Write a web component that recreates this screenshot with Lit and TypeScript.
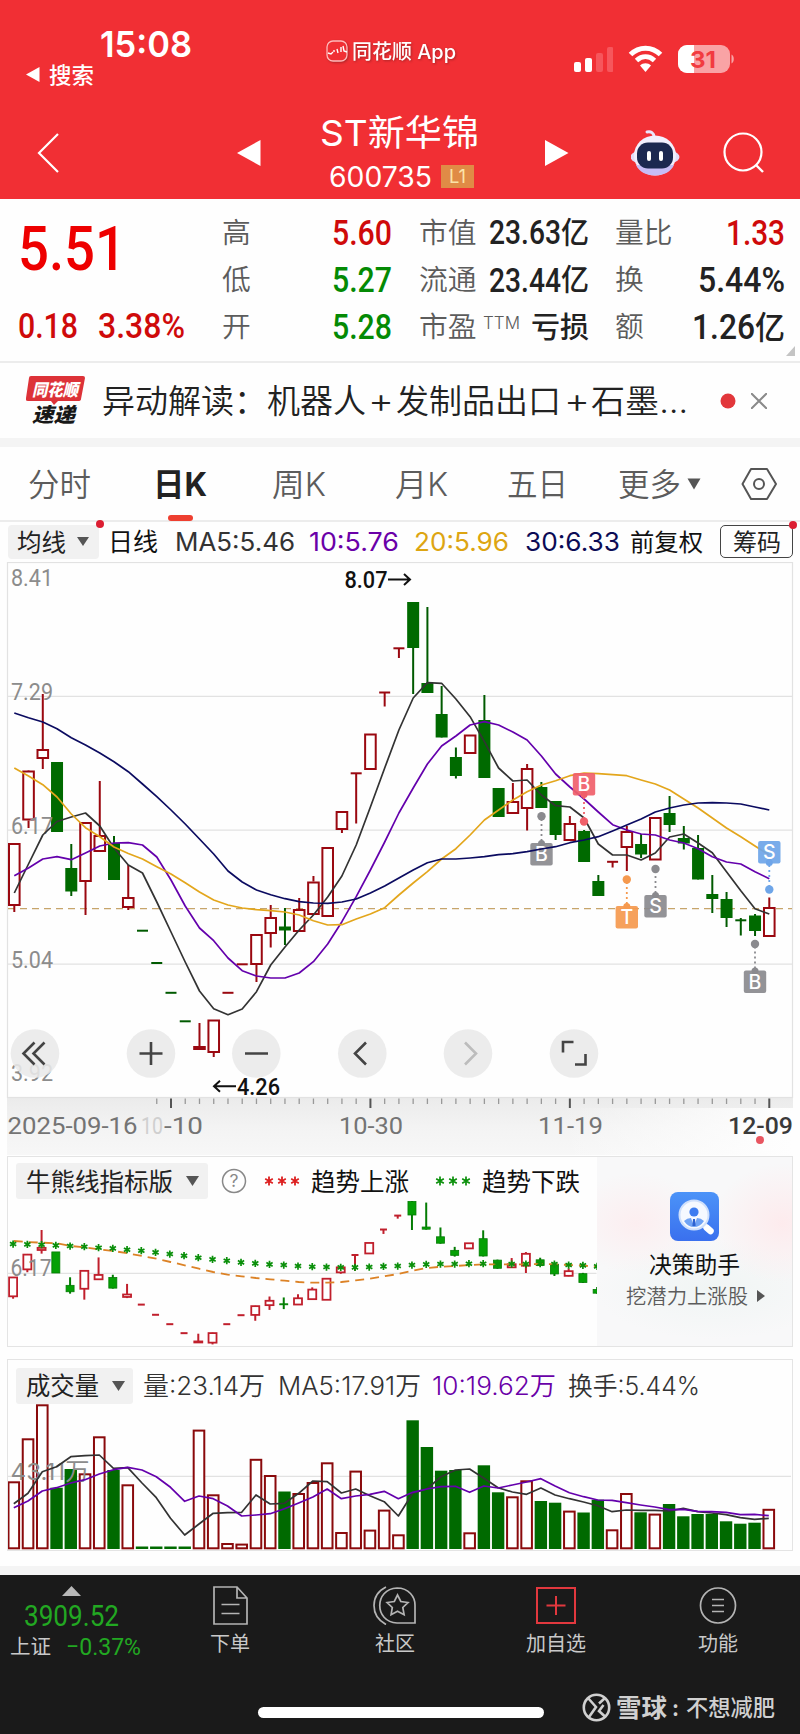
import { LitElement, html, svg, css } from "lit";
import { customElement } from "lit/decorators.js";

type Candle = [kind: "r" | "g", top: number, bottom: number, high?: number, low?: number];

const X0 = 14.3;
const STEP = 14.245;
const cx = (i: number) => X0 + i * STEP;

// Daily candles in chart coordinates: body top, body bottom, wick top, wick bottom.
const CANDLES: Candle[] = [
  ["r", 843, 906, 843, 912], ["r", 770.5, 820.5, 770, 828], ["r", 749, 759, 694, 769], ["g", 762, 832],
  ["g", 868, 891.5, 844, 896], ["r", 822, 882, 822, 915], ["r", 835, 852, 781, 852], ["g", 843, 880, 836, 880],
  ["r", 897, 908, 865, 910], ["g", 930.7, 930.7], ["g", 963, 963], ["g", 992.8, 992.8],
  ["g", 1021.3, 1021.3], ["r", 1046, 1050, 1023, 1050], ["r", 1019.5, 1053, 1019.5, 1057], ["r", 992.8, 992.8],
  ["r", 964.3, 964.3], ["r", 934, 965, 934, 982], ["r", 917, 934, 905, 947.5], ["g", 926.5, 930.5, 908, 945],
  ["r", 909, 932, 898, 932], ["r", 881.5, 915, 876, 915], ["r", 847, 917], ["r", 811, 830, 811, 833],
  ["r", 773.3, 773.3, 773, 823.5], ["r", 733.5, 770], ["r", 692.5, 692.5, 692, 706.5], ["r", 648.3, 648.3, 648, 658],
  ["g", 602, 648, 602, 694], ["g", 683, 693, 607, 693], ["g", 714, 737.5, 686, 737.5], ["g", 757, 776, 747.5, 778.5],
  ["r", 734.5, 754], ["g", 720, 778, 695, 778], ["g", 788, 817, 788, 817], ["r", 801, 814, 783, 814],
  ["r", 768, 809, 764, 830.5], ["g", 787, 808, 782, 808], ["g", 801, 835, 801, 840], ["r", 823, 841, 816, 841],
  ["g", 831, 862, 830, 862], ["g", 881, 896, 875, 896], ["r", 861.8, 861.8, 861, 867.5], ["r", 831, 848, 826, 871],
  ["g", 844, 854.5, 834, 858], ["r", 817, 860.5], ["g", 813, 825, 796, 832], ["g", 838, 843.5, 826, 849.5],
  ["g", 848, 879.5, 835, 879.5], ["g", 894, 899, 875, 913], ["g", 899, 918, 892, 927], ["g", 920.3, 920.3, 918, 935.5],
  ["g", 915.5, 931, 914, 936], ["r", 907, 937, 897.5, 937],
];

const MA5 = [893, 864, 835, 821.5, 817, 813, 826, 848, 865, 873, 902, 932, 962, 991, 1008.7, 1014.7, 1009, 991.7, 965, 947, 930, 915, 897, 876, 845, 807, 768, 730, 698, 682.7, 683.3, 699, 716.7, 741.7, 768, 781, 780, 795, 805.7, 807, 818, 844, 855, 855, 860, 853, 837, 834, 843, 852.7, 871.7, 890.7, 908.7, 914];
const MA10 = [875.7, 868, 859, 856.7, 859.7, 853, 846, 843, 842.7, 845, 857, 880, 906, 928, 940.7, 958, 970.7, 976, 978, 978, 973, 961.7, 944, 921.7, 896.7, 870, 842, 813, 788, 764, 746, 736, 725, 721.7, 725, 732, 740, 756, 774, 787, 799, 812, 824.7, 830, 834, 835, 840, 843, 848.7, 856.7, 862, 864, 871.7, 878.7];
const MA20 = [768, 776, 784.7, 797, 814, 827.7, 836.7, 847, 853.5, 859, 866.7, 874, 882.7, 892, 900, 905, 908, 909.7, 910.7, 912, 915, 920.7, 925, 924.7, 919, 914, 907.7, 895, 883, 871.7, 859, 848.7, 835, 820, 810, 800, 791.7, 785, 780.7, 775.7, 773, 773.7, 774.7, 775.7, 780, 784, 790, 799, 808, 818, 828, 836.7, 846, 855];
const MA30 = [713, 717.7, 722, 728.7, 737.7, 745, 753, 761.7, 771.7, 784, 796.7, 810, 824, 839, 854, 871, 882, 890, 894.7, 898.7, 901.7, 903, 903.3, 902, 899, 893, 886, 878, 870, 862.7, 859, 859, 858, 856.7, 854.7, 853.7, 851.7, 849, 846.7, 842.7, 840, 836.7, 831, 825, 819, 812, 808, 805, 803, 802.7, 803, 804, 807, 810];

const VOL = [1482, 1439, 1405, 1487.7, 1469, 1474, 1437, 1470, 1485, 1546.5, 1546.5, 1546.5, 1546.5, 1430.3, 1495, 1543.7, 1544.3, 1459.5, 1475.7, 1491.5, 1493.7, 1482.7, 1463, 1532.7, 1471.3, 1530.3, 1510.3, 1535, 1420.3, 1447, 1470.7, 1470, 1533, 1465.3, 1492.3, 1497, 1481, 1501, 1502.7, 1511.3, 1512.5, 1499.7, 1530, 1493.7, 1512.3, 1514.3, 1504, 1516.3, 1514, 1514, 1521.3, 1523.7, 1522.7, 1509.5];
const vy = (v: number) => 1355 + v / 3;
const VMA5 = [446, 415, 350, 335, 305, 302, 300, 340, 338, 384, 428, 490, 540, 507, 475, 473, 472, 420, 447, 445, 415, 378, 380, 414, 402, 422, 440, 483, 415, 402, 365, 345, 342, 370, 398, 411, 418, 399, 420, 431, 441, 452, 470, 465, 466, 466, 468, 460, 470, 474, 479, 488, 493, 490].map(vy);
const VMA10 = [458, 438, 408, 398, 384, 374, 357, 344, 337, 345, 365, 397, 439, 423, 431, 453, 483, 480, 476, 461, 444, 426, 402, 431, 423, 418, 409, 431, 412, 402, 395, 394, 412, 393, 399, 390, 381, 371, 393, 413, 425, 435, 436, 443, 450, 456, 464, 463, 469, 470, 472, 479, 478, 482].map(vy);

const my = (v: number) => 1150 + v / 3;
const BULL = [283, 284, 285, 287, 289, 291, 294, 296, 300, 303, 308, 313, 318, 324, 329, 333, 338, 341, 344, 346, 349, 351, 352, 353, 353, 352, 350, 349, 346, 344, 343, 343, 342, 342, 343, 343, 343, 342, 343, 346, 347, 350].map(my);
const BEAR = [273, 276, 278, 280, 288, 292, 298, 303, 310, 318, 326, 336, 346, 356, 366, 374, 379, 384, 388, 392, 396, 398, 398, 396, 391, 386, 379, 372, 362, 354, 350, 348, 345, 343, 343, 343, 343, 342, 343, 345, 347, 350].map(my);

const path = (ys: number[]) => ys.map((y, i) => `${cx(i).toFixed(1)},${y.toFixed(1)}`).join(" ");

// A text run stretched to a fixed advance; its box is exactly as tall as the capitals.
const din = (t: string, w: number, cap: number, cls = "") => html`<svg class="t" width=${w} height=${cap}><text class="din ${cls}" y=${cap} font-size=${cap / 0.711} textLength=${w} lengthAdjust="spacingAndGlyphs">${t}</text></svg>`;
const sf = (t: string, w: number, cap: number, cls = "") => html`<svg class="t" width=${w} height=${cap}><text class="sf ${cls}" y=${cap} font-size=${cap / 0.727} textLength=${w} lengthAdjust="spacingAndGlyphs">${t}</text></svg>`;
const cjk = (t: string, w: number, size: number, cls = "") => html`<svg class="t" width=${w} height=${size}><text class="cjk ${cls}" y=${size * 0.88} font-size=${size} textLength=${w} lengthAdjust="spacingAndGlyphs">${t}</text></svg>`;
const label = (t: string, x: number, y: number, w: number, size: number, cls: string) => svg`<text class=${cls} x=${x} y=${y} font-size=${size} textLength=${w} lengthAdjust="spacingAndGlyphs">${t}</text>`;

const base = css`
  :host { display: block; box-sizing: border-box; }
  * { box-sizing: border-box; }
  svg { display: block; flex: none; }
  .t { overflow: visible; }
  text { white-space: pre; }
  .din { font-family: Roboto, "Noto Sans CJK SC", sans-serif; font-weight: 500; }
  .sf { font-family: Inter, "Noto Sans CJK SC", sans-serif; }
  .cjk { font-family: Inter, "Noto Sans CJK SC", sans-serif; font-weight: 400; }
  .light { font-weight: 350; }
  .reg { font-weight: 400; }
  .mid { font-weight: 500; }
  .semi { font-weight: 600; }
  .bold { font-weight: 700; }
  .white { fill: #fff; }
  .black { fill: #111; }
  .dark { fill: #333; }
  .ink { fill: #222; }
  .gray { fill: #5c5c5c; }
  .soft { fill: #8c8c8c; }
  .up { fill: #cf0a0a; }
  .big { fill: #ee0000; }
  .down { fill: #048a04; }
  .purple { fill: #6a00a8; }
  .gold { fill: #dda512; }
  .navy { fill: #0b0b55; }
  .candle-r { fill: #fff; stroke: #9a0810; stroke-width: 2; }
  .candle-g { fill: #006a00; }
  .wick-r { stroke: #9a0810; stroke-width: 2; fill: none; }
  .wick-g { stroke: #005a00; stroke-width: 2; fill: none; }
  .grid { stroke: #e2e2e2; stroke-width: 1.2; fill: none; }
  .l5 { stroke: #333; }
  .l10 { stroke: #6400ac; }
  .l20 { stroke: #e3a61c; }
  .l30 { stroke: #0b0b60; }
  .ma { fill: none; stroke-width: 1.7; stroke-linejoin: round; }
`;

@customElement("app-header")
class AppHeader extends LitElement {
  static styles = [base, css`
    :host { height: 199px; background: #f12f34; }
    .status { display: grid; grid-template-columns: 326px 248px 1fr; height: 90px; }
    .left { display: grid; grid-template-rows: 26px 21px; row-gap: 7px; padding: 31px 0 0 26px; }
    .time { padding-left: 74px; }
    .back-app { display: flex; align-items: center; gap: 9px; }
    .mid-app { display: flex; gap: 4px; padding-top: 40px; align-items: center; align-self: start; filter: drop-shadow(1px 1px 1px #8a2020aa); }
    .right { display: flex; padding-top: 45px; align-items: flex-start; gap: 15px; }
    .nav { display: grid; grid-template-columns: 37px 200px 83px 225px 86px 92px 1fr; height: 109px; align-items: center; padding-top: 17px; }
    .name { display: grid; row-gap: 15px; justify-items: start; padding-bottom: 5px; }
    .code { display: flex; align-items: center; gap: 9px; padding-left: 9px; }
    .l1 { width: 33px; height: 23px; background: #e08b46; display: grid; place-items: center; }
    .l1t { fill: #fbe3a8; }
    .bt { fill: #f23b40; }
  `];
  render() {
    return html`
      <div class="status">
        <div class="left">
          <div class="time">${sf("15:08", 92, 26, "white semi")}</div>
          <div class="back-app">
            <svg width="14" height="15"><path d="M13.500 0V15L0 7.500Z" fill="#fff" /></svg>
            ${cjk("搜索", 45, 22, "white mid")}
          </div>
        </div>
        <div class="mid-app">
          <svg width="22" height="22" viewBox="0 0 22 22"><rect x="1" y="1" width="20" height="20" rx="6" fill="#f12f34" stroke="#fbb" stroke-width="1.300" /><path d="M2 13l3 1 2-2M8 10v2M11 9l1 4M15 7v5M17 6l1 5 3 1" stroke="#fff" stroke-width="1.400" fill="none" /></svg>
          ${cjk("同花顺 App", 104, 20, "white mid")}
        </div>
        <div class="right">
          <svg width="39" height="28"><rect x="0" y="17" width="7" height="10" rx="2" fill="#fff" /><rect x="11" y="13" width="7" height="14" rx="2" fill="#fff" /><rect x="22" y="8" width="7" height="19" rx="2" fill="#f6565c" /><rect x="33" y="2" width="6.500" height="25" rx="2" fill="#f6565c" /></svg>
          <svg width="35" height="28" viewBox="0 0 35 28"><g fill="none" stroke="#fff" stroke-width="5"><path d="M2.500 9.500C11 1 24 1 32.500 9.500" /><path d="M8.500 15.500C14 10.500 21 10.500 26.500 15.500" /></g><path d="M12 20.500c3-3 8-3 11 0L17.500 27Z" fill="#fff" /></svg>
          <svg width="57" height="28"><defs><clipPath id="b"><rect width="52" height="28" rx="9" /></clipPath></defs><g clip-path="url(#b)"><rect width="52" height="28" fill="#f9a3a5" /><rect width="16" height="28" fill="#fff" /></g><path d="M53.500 9.500c3 1 3 8 0 9Z" fill="#f9a3a5" />${label("31", 12, 22.500, 26, 23, "sf bold bt")}</svg>
        </div>
      </div>
      <div class="nav">
        <span></span>
        <svg width="23" height="40"><path d="M21 1L2 20L21 39" stroke="#fff" stroke-width="2.200" fill="none" /></svg>
        <svg width="24" height="26"><path d="M23.500 0V26L0 13Z" fill="#fff" /></svg>
        <div class="name">
          ${cjk("ST新华锦", 159, 36, "white")}
          <div class="code">${sf("600735", 103, 20.500, "white")}<div class="l1">${sf("L1", 17, 14, "l1t")}</div></div>
        </div>
        <svg width="24" height="26"><path d="M0 0V26L23.500 13Z" fill="#fff" /></svg>
        <svg width="49" height="48" viewBox="0 0 49 48">
          <path d="M23 8c0-4-3-6-7-5" stroke="#e9e4fb" stroke-width="3" fill="none" stroke-linecap="round" />
          <ellipse cx="24" cy="28" rx="24.500" ry="9" fill="#e3dcf8" /><ellipse cx="24" cy="26.500" rx="21" ry="20" fill="#f2effd" /><path d="M5 36c6 14 32 14 38 0Z" fill="#c7bdf5" />
          <rect x="6" y="13.500" width="36" height="26" rx="11" fill="#1c2850" /><rect x="16" y="22" width="4" height="10" rx="2" fill="#fff" /><rect x="28" y="22" width="4" height="10" rx="2" fill="#fff" />
        </svg>
        <svg width="43" height="42"><circle cx="20" cy="20" r="18.500" fill="none" stroke="#fff" stroke-width="2.200" /><path d="M33 33l7 7" stroke="#fff" stroke-width="2.400" /></svg>
      </div>`;
  }
}

@customElement("quote-panel")
class QuotePanel extends LitElement {
  static styles = [base, css`
    :host { height: 164px; background: #fefefe; border-bottom: 2px solid #ececec; display: grid; grid-template-columns: 200px 192px 197px 1fr 15px; column-gap: 0; align-items: start; }
    .price { padding: 27px 0 0 18px; display: grid; row-gap: 43px; }
    .chg { display: flex; gap: 20px; }
    .col { display: grid; grid-template-rows: repeat(3, 47.200px); padding-top: 9.600px; }
    .row { display: flex; justify-content: space-between; align-items: center; }
    .c2 .row { padding-left: 22px; }
    .c3 .row { padding: 0 0 0 27px; }
    .c4 .row { padding-left: 26px; }
    .num { display: flex; align-items: center; }
    .ttm { padding: 0 8px 8px 6px; margin-right: auto; }
    .corner { align-self: end; padding-bottom: 5px; }
  `];
  render() {
    const row = (l: string, v: unknown, extra: unknown = "") => html`<div class="row">${cjk(l, l.length * 28.8, 28.5, "gray light")}${extra}<div class="num">${v}</div></div>`;
    const yi = cjk("亿", 28, 30, "ink mid");
    return html`
      <div class="price">${din("5.51", 108, 44, "big")}<div class="chg">${din("0.18", 60, 24.500, "up")}${din("3.38%", 87, 24.500, "up")}</div></div>
      <div class="col c2">${row("高", din("5.60", 60, 24.500, "up"))}${row("低", din("5.27", 60, 24.500, "down"))}${row("开", din("5.28", 60, 24.500, "down"))}</div>
      <div class="col c3">${row("市值", [din("23.63", 72, 23.500, "ink"), yi])}${row("流通", [din("23.44", 72, 23.500, "ink"), yi])}
        ${row("市盈", cjk("亏损", 58, 29, "ink mid"), html`<div class="ttm">${sf("TTM", 37, 13, "gray light")}</div>`)}</div>
      <div class="col c4">${row("量比", din("1.33", 59, 24.500, "up"))}${row("换", din("5.44%", 87, 24.500, "ink"))}${row("额", [din("1.26", 63, 24.500, "ink"), cjk("亿", 30, 32, "ink mid")])}</div>
      <svg class="corner" width="12" height="15"><path d="M10 0V10H1Z" fill="#c4c4c4" /></svg>`;
  }
}

@customElement("news-strip")
class NewsStrip extends LitElement {
  static styles = [base, css`
    :host { height: 84px; background: #fefefe; border-bottom: 9px solid #f4f4f4; display: grid; grid-template-columns: 26px 76px 264px 2px 26px 2px 165px 3px 26px 1px 129px 31px 1fr; align-items: center; }
    .tagt { fill: #fff; font-style: italic; font-weight: 900; }
    .tagb { fill: #181818; font-style: italic; font-weight: 900; }
  `];
  render() {
    return html`<span></span>
      <svg width="60" height="54" viewBox="0 0 60 54"><path d="M5 2H57Q59 2 59 4L55 25Q55 27 52 27H32L28 31L25 27H2Q-1 27 0 24L3 4Q3 2 5 2Z" fill="#dd3238" />
        ${label("同花顺", 6, 21.500, 46, 17, "cjk tagt")}${label("速递", 6, 48, 43, 20, "cjk tagb")}</svg>
      ${cjk("异动解读：机器人", 264, 33, "ink light")}<span></span>
      ${sf("+", 26, 25, "ink light")}<span></span>${cjk("发制品出口", 165, 33, "ink light")}<span></span>${sf("+", 26, 25, "ink light")}<span></span>
      ${cjk("石墨…", 97, 33, "ink light")}
      <svg width="16" height="16"><circle cx="8" cy="8" r="7.500" fill="#e2373b" /></svg>
      <svg width="16" height="16"><path d="M0 0L16 16M16 0L0 16" stroke="#8a8a8a" stroke-width="2" /></svg>`;
  }
}

@customElement("period-tabs")
class PeriodTabs extends LitElement {
  static styles = [base, css`
    :host { height: 75px; background: #fefefe; border-bottom: 2px solid #ececec; display: grid; grid-template-columns: 125px 119px 123px 112px 111px 69px 54px 1fr; padding-left: 28px; }
    .tab { display: grid; grid-template-rows: 68px 5px; align-items: center; }
    .tab > svg { margin-top: 5px; }
    .bar { width: 25px; height: 6px; border-radius: 3px; background: #ee3f30; margin-left: 15px; }
  `];
  render() {
    const tab = (t: string, w: number, cls = "gray light") => html`<div class="tab">${cjk(t, w, 32, cls)}</div>`;
    return html`${tab("分时", 63)}
      <div class="tab">${cjk("日K", 54, 32, "ink bold")}<div class="bar"></div></div>
      ${tab("周K", 54)}${tab("月K", 53)}${tab("五日", 61)}${tab("更多", 63)}
      <div class="tab"><svg width="14" height="12"><path d="M0.500 0.500H13.500L7 11.500Z" fill="#555" /></svg></div>
      <div class="tab"><svg width="37" height="34" viewBox="0 0 37 34"><path d="M10 2H26L35 17L26 32H10L1.500 17Z" fill="none" stroke="#555" stroke-width="2" stroke-linejoin="round" /><circle cx="18" cy="17" r="5" fill="none" stroke="#555" stroke-width="2" /></svg></div>`;
  }
}

@customElement("ma-legend")
class MaLegend extends LitElement {
  static styles = [base, css`
    :host { height: 40px; background: #fefefe; display: grid; grid-template-columns: 100px 67px 134px 105px 111px 105px 90px 1fr; padding: 0 0 1px 8px; align-items: center; }
    .btn { position: relative; width: 91px; height: 34px; background: #f1f1f1; border-radius: 4px; display: flex; align-items: center; gap: 11px; padding-left: 9px; }
    .box { position: relative; width: 73px; height: 33px; border: 1.500px solid #444; border-radius: 5px; display: grid; place-items: center; }
    .dot { position: absolute; width: 8px; height: 8px; border-radius: 50%; background: #dc1e32; right: -5px; top: -5px; }
  `];
  render() {
    return html`<div class="btn">${cjk("均线", 49, 24, "ink")}<svg width="12" height="9"><path d="M0 0H12L6 9Z" fill="#555" /></svg><i class="dot"></i></div>
      ${cjk("日线", 50, 24.500, "black")}${sf("MA5:5.46", 120, 18.500, "dark reg")}${sf("10:5.76", 90, 18.500, "purple reg")}
      ${sf("20:5.96", 95, 18.500, "gold reg")}${sf("30:6.33", 95, 18.500, "navy reg")}${cjk("前复权", 73, 24, "black")}
      <div class="box">${cjk("筹码", 48, 24, "ink")}<i class="dot"></i></div>`;
  }
}

@customElement("k-chart")
class KChart extends LitElement {
  static styles = [base, css`
    :host { background: #fefefe; }
    .tick { stroke: #999; stroke-width: 1.300; }
    .major { stroke: #555; stroke-width: 2; }
    .btn { fill: #e9e9e9; fill-opacity: 0.880; }
    .ico { fill: none; stroke: #444; stroke-width: 2.600; }
    .off { stroke: #bcbcbc; }
    .axis { fill: #747474; font-weight: 450; }
    .today { fill: #3a3a3a; }
    .faint { fill: #cfcfcf; font-weight: 400; }
    .arrow { fill: none; stroke: #111; stroke-width: 2; }
    .mk { font-family: Inter, sans-serif; fill: #fff; font-weight: 500; }
  `];
  marker(x: number, boxY: number, dotY: number, t: string, c: string) {
    const above = dotY > boxY;
    return svg`<g><line x1=${x} x2=${x} y1=${above ? boxY + 24 : boxY - 2} y2=${dotY} stroke=${c} stroke-width="1.800" stroke-dasharray="2 3" />
      <circle cx=${x} cy=${dotY} r="4.200" fill=${c} /><circle cx=${x} cy=${above ? boxY + 21.5 : boxY + 0.5} r="3.500" fill=${c} />
      <rect x=${x - 11.2} y=${boxY} width="22.400" height="22.400" rx="2" fill=${c} fill-opacity=".92" />
      <text class="mk" x=${x} y=${boxY + 18.3} font-size="19.500" text-anchor="middle">${t}</text></g>`;
  }
  render() {
    return html`<svg width="800" height="594" viewBox="0 562 800 594">
      <defs>
        <linearGradient id="ax" x2="0" y2="1"><stop offset="0" stop-color="#ebebeb" /><stop offset=".5" stop-color="#f3f3f3" /><stop offset="1" stop-color="#f7f7f7" /></linearGradient>
        <linearGradient id="fade"><stop offset="0" stop-color="#fefefe" stop-opacity="0" /><stop offset="1" stop-color="#fefefe" /></linearGradient>
      </defs>
      <rect x="7" y="1098" width="786" height="57" fill="url(#ax)" /><rect x="560" y="1108" width="233" height="47" fill="url(#fade)" />
      <rect class="grid" x="7.500" y="562.500" width="785" height="535" />
      ${[696.3, 830.2, 964.2].map((y) => svg`<path class="grid" d=${`M8 ${y}H792`} />`)}
      <path d="M8 908.700H792" stroke="#c7a56b" stroke-width="1.200" stroke-dasharray="7 5" />
      ${CANDLES.map(([k, t, b, h, l], i) => {
        const x = cx(i);
        const flat = b - t < 1;
        return svg`${h !== undefined ? svg`<path class=${"wick-" + k} d=${flat || k === "g" ? `M${x} ${h}V${l}` : `M${x} ${h}V${t}M${x} ${b}V${l}`} />` : ""}
          ${flat ? svg`<path class=${"wick-" + k} d=${`M${x - 5.500} ${t}h11`} />`
            : k === "g" ? svg`<rect class="candle-g" x=${x - 6} y=${t} width="12" height=${b - t} />`
            : svg`<rect class="candle-r" x=${x - 5.3} y=${t + 1} width="10.600" height=${b - t - 2} />`}`;
      })}
      ${[["8.41", 586], ["7.29", 699.5], ["6.17", 833.5], ["5.04", 967.5], ["3.92", 1080.5]].map(([t, y]) => label(t as string, 11, y as number, 42, 24, "din reg soft"))}
      <polyline class="ma l5" points=${path(MA5)} />
      ${this.marker(541.5, 843, 816.3, "B", "#8a8a8e")}
      <polyline class="ma l10" points=${path(MA10)} /><polyline class="ma l20" points=${path(MA20)} />
      ${this.marker(584, 773, 821.5, "B", "#f0606a")}${this.marker(626.8, 906, 879.5, "T", "#f5994e")}
      ${this.marker(655.5, 895, 869, "S", "#8a8a8e")}${this.marker(755, 970.5, 944, "B", "#8a8a8e")}${this.marker(769.3, 841, 889.5, "S", "#6ea5e8")}
      <polyline class="ma l30" points=${path(MA30)} />
      ${label("8.07", 344.5, 588, 43, 23.5, "din black")}<path class="arrow" d="M388 579.500h22m-6-5.500l6 5.500l-6 5.500" />
      ${label("4.26", 237, 1095, 43, 23.5, "din black")}<path class="arrow" d="M236 1086.300h-22m6-5.500l-6 5.500l6 5.500" />
      ${[35, 151, 256.3, 362.3, 468, 574].map((x) => svg`<circle class="btn" cx=${x} cy="1053.500" r="24.300" />`)}
      <g class="ico"><path d="M34.500 1042.500L23.500 1053.500L34.500 1064.500M44.500 1042.500L33.500 1053.500L44.500 1064.500" />
        <path d="M139.500 1053.500h23M151 1042v23M245 1053.500h23" /><path d="M366 1042.500L355 1053.500L366 1064.500" />
        <path class="off" d="M465 1042.500L476 1053.500L465 1064.500" /><path d="M563 1052.500v-10.500h10.500M575 1064.500h10.500v-10.500" /></g>
      ${Array.from({ length: 44 }, (_, k) => k + 10).map((i) => svg`<line class=${(i - 11) % 14 === 0 ? "major" : "tick"} x1=${cx(i)} x2=${cx(i)} y1="1098.500" y2=${(i - 11) % 14 === 0 ? 1108 : 1104} />`)}
      ${label("2025-09-16", 7.500, 1134, 130, 24, "din axis")}${label("10", 141, 1134, 22, 24, "din faint")}${label("-10", 164, 1134, 39, 24, "din axis")}
      ${label("10-30", 339, 1134, 64, 24, "din axis")}${label("11-19", 538, 1134, 65, 24, "din axis")}${label("12-09", 728, 1134, 65, 24, "din today")}
      <circle cx="760" cy="1140" r="4" fill="#e85560" />
    </svg>`;
  }
}

@customElement("trend-panel")
class TrendPanel extends LitElement {
  static styles = [base, css`
    :host { margin: 0 7px; width: 786px; height: 191px; border: 1.500px solid #e4e4e4; border-top-width: 1px; background: #fefefe; display: grid; grid-template-columns: 589px 1fr; overflow: hidden; }
    .head { display: grid; grid-template-columns: 192px 13px 27px 16px 47px 124px 47px 1fr; height: 43px; align-items: center; padding: 5px 0 0 8px; }
    .btn { width: 192px; height: 36px; background: #f1f1f1; border-radius: 3px; display: flex; align-items: center; gap: 13px; padding-left: 10px; }
    .promo { display: grid; justify-items: center; align-content: start; padding-top: 35px; row-gap: 12px; background: radial-gradient(ellipse 70px 50px at 20% 35%, #fceef0 0%, transparent 100%), radial-gradient(ellipse 70px 60px at 95% 35%, #fdebed 0%, transparent 100%), radial-gradient(ellipse 120px 50px at 60% 70%, #f0f5f4 0%, transparent 100%), #f8f8f9; }
    .sub { display: flex; align-items: center; gap: 9px; margin-top: -2px; padding-left: 1px; }
    .mr { fill: #fff; stroke: #c01f2c; stroke-width: 1.800; }
    .mg { fill: #05a005; stroke: #047c04; stroke-width: 0.800; }
    .mw { stroke-width: 2; }
    .bear { fill: none; stroke: #dc8226; stroke-width: 1.800; stroke-dasharray: 9 6; }
    .sr { stroke: #dd1f1f; stroke-width: 1.800; }
    .sg { stroke: #0a8f0a; stroke-width: 1.700; }
    .q { fill: #888; }
  `];
  star(x: number, y: number, r: number, cls: string) {
    const a = r * 0.87;
    const b = r * 0.5;
    return svg`<path class=${cls} d=${`M${x} ${y - r}V${y + r}M${x - a} ${y - b}L${x + a} ${y + b}M${x - a} ${y + b}L${x + a} ${y - b}`} />`;
  }
  render() {
    const m = (y: number) => 1201 + (y - 602) * 0.3152;
    const stars = (cls: string) => html`<svg width="36" height="12">${[5, 18, 31].map((x) => this.star(x, 6, 4.4, cls))}</svg>`;
    return html`<div>
        <div class="head">
          <div class="btn">${cjk("牛熊线指标版", 147, 24.500, "ink")}<svg width="13" height="10"><path d="M0 0H13L6.500 10Z" fill="#555" /></svg></div><span></span>
          <svg width="26" height="26"><circle cx="13" cy="13" r="11.500" fill="none" stroke="#888" stroke-width="1.500" />${label("?", 8.5, 19, 9, 17, "sf q")}</svg>
          <span></span>${stars("sr")}${cjk("趋势上涨", 98, 24.500, "black")}${stars("sg")}${cjk("趋势下跌", 98, 24.500, "black")}
        </div>
        <svg width="589" height="146" viewBox="8.500 1200 589 146">
          <path class="grid" d="M8 1273.300H597" />
          ${CANDLES.slice(0, 42).map(([k, t, b, h, l], i) => {
            const x = cx(i) - 0.7;
            const flat = b - t < 3;
            const dk = i > 8 && i < 13 ? "r" : k;
            const cls = dk === "r" ? "mr" : "mg";
            return svg`${h !== undefined ? svg`<path class=${cls + " mw"} d=${`M${x} ${m(h)}V${m(l!)}`} />` : ""}
              ${flat ? svg`<path class=${cls + " mw"} d=${`M${x - 3.500} ${m(t)}h7`} />` : svg`<rect class=${cls} x=${x - 4} y=${m(t) + 0.5} width="8" height=${Math.max(1, m(b) - m(t) - 1)} />`}`;
          })}
          ${label("6.17", 11, 1276, 41, 24, "din reg soft")}
          <polyline class="bear" points=${path(BEAR)} />
          ${BULL.map((y, i) => this.star(cx(i) - 0.7, y - 0.3, 3.6, "sg"))}
        </svg>
      </div>
      <div class="promo">
        <svg width="49" height="49" viewBox="0 0 49 49"><defs><linearGradient id="pg" x2="0" y2="1"><stop offset="0" stop-color="#4b93f8" /><stop offset="1" stop-color="#3a70ee" /></linearGradient></defs>
          <rect width="49" height="49" rx="8" fill="url(#pg)" /><path d="M36.500 35.500l4 3.500" stroke="#fff" stroke-width="6.500" stroke-linecap="round" />
          <circle cx="24" cy="23" r="14.500" fill="#f5f9ff" stroke="#cfe0fb" stroke-width="2" /><circle cx="24" cy="20" r="4.600" fill="#3d7cf0" /><path d="M14 29q3-3 7-3l3 8l3-8q4 0 7 3q-4 6-10 6t-10-6Z" fill="#6fa3f5" /><path d="M23 27h2l.6 7h-3.200Z" fill="#2d62d0" /></svg>
        ${cjk("决策助手", 91, 23, "black")}
        <div class="sub">${cjk("挖潜力上涨股", 122, 20.500, "gray light")}<svg width="8" height="12"><path d="M0 0L8 6L0 12Z" fill="#555" /></svg></div>
      </div>`;
  }
}

@customElement("volume-panel")
class VolumePanel extends LitElement {
  static styles = [base, css`
    :host { margin: 12px 7px 0; width: 786px; height: 192px; border: 1.500px solid #e4e4e4; background: #fefefe; }
    .head { display: grid; grid-template-columns: 127px 135px 154px 136px 1fr; height: 44px; align-items: center; padding: 7px 0 0 8px; }
    .btn { width: 117px; height: 36px; background: #f1f1f1; border-radius: 3px; display: flex; align-items: center; gap: 13px; padding-left: 10px; }
    .vr { fill: #fff; stroke: #8a0a0c; stroke-width: 2; }
  `];
  render() {
    return html`<div class="head">
        <div class="btn">${cjk("成交量", 73, 24.500, "ink")}<svg width="13" height="10"><path d="M0 0H13L6.500 10Z" fill="#555" /></svg></div>
        ${cjk("量:23.14万", 122, 25, "dark light")}${cjk("MA5:17.91万", 143, 25, "dark light")}${cjk("10:19.62万", 124, 25, "purple light")}${cjk("换手:5.44%", 132, 25, "dark light")}
      </div>
      <svg width="783" height="146" viewBox="8.500 1404 783 146">
        <path class="grid" d="M8 1476.300H792" />
        ${CANDLES.map(([k], i) => k === "g" ? svg`<rect class="candle-g" x=${cx(i) - 6.2} y=${VOL[i]} width="12.400" height=${1549 - VOL[i]} />`
          : svg`<rect class="vr" x=${cx(i) - 5.3} y=${VOL[i] + 0.3} width="10.600" height=${1548 - VOL[i]} />`)}
        ${label("43.11万", 11, 1480, 79, 23.500, "cjk soft")}
        <polyline class="ma l5" points=${path(VMA5)} /><polyline class="ma l10" points=${path(VMA10)} />
      </svg>`;
  }
}

@customElement("bottom-bar")
class BottomBar extends LitElement {
  static styles = [base, css`
    :host { height: 168px; margin-top: 15px; border-top: 9px solid #f4f4f4; background: #1a1a1a; }
    .items { display: grid; grid-template-columns: 142px 176px 153px 170px 153px; height: 118px; padding-top: 11px; align-items: start; }
    .idx { display: grid; justify-items: center; row-gap: 9px; }
    .pair { display: flex; align-items: center; gap: 15px; padding-left: 8px; margin-top: 1px; }
    .item { display: grid; justify-items: center; row-gap: 8px; }
    .gr { fill: #22a822; }
    .lt { fill: #c9c9c9; }
    .st { fill: none; stroke: #b4b4b4; stroke-width: 1.700; }
    .red { fill: none; stroke: #e2383e; stroke-width: 2; }
    .foot { display: grid; grid-template-columns: 258px 286px 38px 34px 51px 19px 1fr; align-items: center; }
    .home { height: 11.500px; border-radius: 6px; background: #fff; margin-top: 10px; }
    .wm { fill: #d0d0d0; }
  `];
  render() {
    const item = (icon: unknown, t: string) => html`<div class="item">${icon}${cjk(t, t.length * 20, 20, "lt")}</div>`;
    return html`<div class="items">
        <div class="idx"><svg width="19" height="10"><path d="M9.500 0L19 10H0Z" fill="#b8b8b8" /></svg>${din("3909.52", 95, 20.500, "gr reg")}
          <div class="pair">${cjk("上证", 41, 20, "lt")}${din("−0.37%", 75, 17.500, "gr reg")}</div></div>
        ${item(html`<svg width="35" height="39" viewBox="0 0 35 39"><path class="st" d="M1 1H24L34 12V38H1ZM24 1V12H34M8.500 18.500H26.500M8.500 27.500H26.500" /></svg>`, "下单")}
        ${item(html`<svg width="43" height="39" viewBox="0 0 43 39"><path class="st" d="M13 1C-3 9-3 30 13 38.500M42 37H24C1 36 1 3 24 2C36 2 42 11 42 19Z" /><path class="st" d="M24.500 9l3.300 6.500l7.200 1l-5.200 5l1.300 7.200l-6.600-3.500l-6.400 3.500l1.200-7.200l-5.200-5l7.200-1Z" /></svg>`, "社区")}
        ${item(html`<svg width="40" height="39" viewBox="0 0 40 39"><rect class="red" x="1" y="2" width="38" height="35" /><path class="red" d="M10.500 19.500h19M20 10v19" /></svg>`, "加自选")}
        ${item(html`<svg width="38" height="39" viewBox="0 0 38 39"><circle class="st" cx="19" cy="19.500" r="17.500" /><path class="st" d="M13 13.500h12M13 19.500h12M13 25.500h12" /></svg>`, "功能")}
      </div>
      <div class="foot"><span></span><div class="home"></div><span></span>
        <svg width="29" height="29" viewBox="0 0 29 29"><circle cx="14.500" cy="14.500" r="12.700" fill="none" stroke="#d0d0d0" stroke-width="2.600" /><path d="M6 5L14 14L7 24M23 5L17 10.500M23.500 24L17 18L21.500 12" fill="none" stroke="#d0d0d0" stroke-width="2.600" /></svg>
        ${cjk("雪球", 51, 25, "wm bold")}${cjk(" :", 12, 22, "wm bold")}${cjk("不想减肥", 89, 22.500, "wm mid")}
      </div>`;
  }
}

@customElement("app-root")
class AppRoot extends LitElement {
  static styles = css`
    :host { display: block; width: 800px; height: 1734px; overflow: hidden; background: #fefefe; }
  `;
  render() {
    return html`<app-header></app-header><quote-panel></quote-panel><news-strip></news-strip><period-tabs></period-tabs>
      <ma-legend></ma-legend><k-chart></k-chart><trend-panel></trend-panel><volume-panel></volume-panel><bottom-bar></bottom-bar>`;
  }
}
